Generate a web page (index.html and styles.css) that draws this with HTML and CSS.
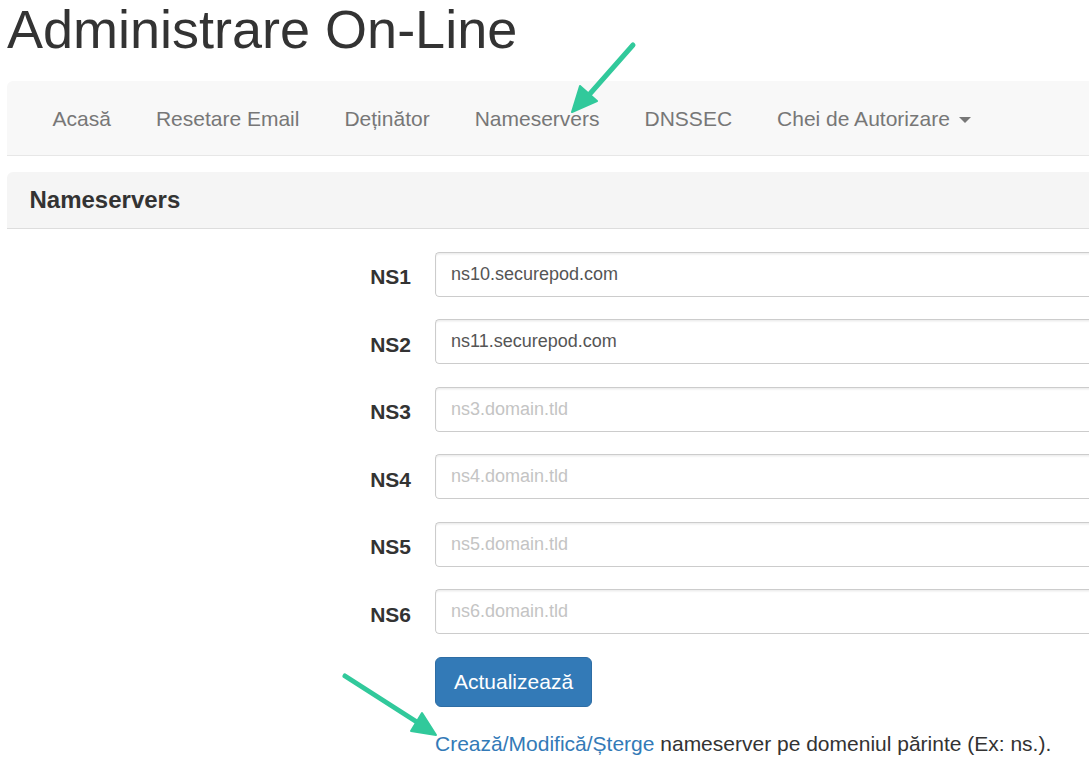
FILE: index.html
```html
<!DOCTYPE html>
<html lang="ro">
<head>
	<meta charset="utf-8" />
	<title>Administrare On-Line - Nameservers</title>
	<link rel="stylesheet" href="styles.css">
</head>
<body>
	<div class="page">
		<h1 class="title">Administrare On-Line</h1>

		<div class="navbar">
			<ul class="nav">
				<li><a href="#">Acasă</a></li>
				<li><a href="#">Resetare Email</a></li>
				<li><a href="#">Deținător</a></li>
				<li><a href="#">Nameservers</a></li>
				<li><a href="#">DNSSEC</a></li>
				<li><a href="#">Chei de Autorizare <span class="caret"></span></a></li>
			</ul>
		</div>

		<div class="panel">
			<div class="panel-heading">
				<h3 class="panel-title">Nameservers</h3>
			</div>
			<form class="panel-body ns-form">
				<label for="ns1">NS1</label>
				<input id="ns1" name="ns1" type="text" value="ns10.securepod.com" placeholder="ns1.domain.tld" />

				<label for="ns2">NS2</label>
				<input id="ns2" name="ns2" type="text" value="ns11.securepod.com" placeholder="ns2.domain.tld" />

				<label for="ns3">NS3</label>
				<input id="ns3" name="ns3" type="text" placeholder="ns3.domain.tld" />

				<label for="ns4">NS4</label>
				<input id="ns4" name="ns4" type="text" placeholder="ns4.domain.tld" />

				<label for="ns5">NS5</label>
				<input id="ns5" name="ns5" type="text" placeholder="ns5.domain.tld" />

				<label for="ns6">NS6</label>
				<input id="ns6" name="ns6" type="text" placeholder="ns6.domain.tld" />

				<div class="field">
					<button type="button" class="btn">Actualizează</button>
				</div>

				<p class="field help"><a href="#">Crează/Modifică/Șterge</a> nameserver pe domeniul părinte (Ex: ns.).</p>
			</form>
		</div>
	</div>

	<svg class="marks" width="1089" height="781" viewBox="0 0 1089 781">
		<g fill="#31c99b" stroke="#31c99b" stroke-linecap="round" stroke-linejoin="round">
			<line x1="633" y1="45" x2="588" y2="96" stroke-width="5" />
			<polygon points="572,112 580,86 597,101" stroke-width="2" />
			<line x1="345" y1="676" x2="420" y2="724" stroke-width="5" />
			<polygon points="436,735 411,731 422,713" stroke-width="2" />
		</g>
	</svg>
</body>
</html>
```

FILE: styles.css
```css
html, body
{
	margin: 0;
	overflow: hidden;
	background-color: #FFFFFF;
}

body
{
	font-family: "Liberation Sans", Arial, sans-serif;
	font-size: 21px;
	line-height: 30px;
	color: #333333;
}

div.page
{
	width: 1090px;
	padding-left: 7px;
}

h1.title
{
	margin: 0 0 21.6px;
	font-size: 54px;
	font-weight: normal;
	line-height: 1.1;
}

div.navbar
{
	box-sizing: border-box;
	display: flex;
	align-items: center;
	height: 75px;
	padding: 2px 0 0 23px;
	background-color: #F8F8F8;
	border-bottom: 1px solid #E7E7E7;
	border-radius: 6px 0 0 0;
}

	div.navbar ul.nav
	{
		display: flex;
		margin: 0;
		padding: 0;
		list-style: none;
	}

	div.navbar ul.nav a
	{
		display: block;
		padding: 0 22.5px;
		color: #777777;
		text-decoration: none;
	}

	div.navbar span.caret
	{
		display: inline-block;
		width: 0;
		height: 0;
		margin-left: 3px;
		vertical-align: middle;
		border-top: 6px solid #777777;
		border-left: 6px solid transparent;
		border-right: 6px solid transparent;
	}

div.panel
{
	margin-top: 16px;
}

	div.panel div.panel-heading
	{
		padding: 15px 22.5px;
		background-color: #F5F5F5;
		border-bottom: 1px solid #DDDDDD;
		border-radius: 6px 0 0 0;
	}

	div.panel h3.panel-title
	{
		margin: 0;
		font-size: 24px;
		font-weight: bold;
		line-height: 1.1;
		color: #333333;
	}

form.ns-form
{
	display: grid;
	grid-template-columns: 404px 1fr;
	column-gap: 24px;
	row-gap: 22.5px;
	padding-top: 22.5px;
	margin: 0;
}

	form.ns-form label
	{
		padding-top: 10.5px;
		text-align: right;
		font-weight: bold;
		line-height: 30px;
	}

	form.ns-form input
	{
		box-sizing: border-box;
		width: 100%;
		height: 45px;
		padding: 0 15px;
		font-family: "Liberation Sans", Arial, sans-serif;
		font-size: 18px;
		color: #555555;
		background-color: #FFFFFF;
		border: 1px solid #CCCCCC;
		border-right: none;
		border-radius: 4.5px 0 0 4.5px;
		box-shadow: inset 0 1.5px 1.5px rgba(0, 0, 0, 0.075);
		outline: none;
	}

	form.ns-form input::placeholder
	{
		color: #C4C4C4;
	}

	form.ns-form .field
	{
		grid-column: 2;
		margin: 0;
	}

	form.ns-form button.btn
	{
		padding: 9px 18px;
		font-family: "Liberation Sans", Arial, sans-serif;
		font-size: 21px;
		line-height: 30px;
		color: #FFFFFF;
		background-color: #337AB7;
		border: 1px solid #2E6DA4;
		border-radius: 6px;
	}

	form.ns-form p.help a
	{
		color: #337AB7;
		text-decoration: none;
	}

svg.marks
{
	position: absolute;
	left: 0;
	top: 0;
	pointer-events: none;
}
```
